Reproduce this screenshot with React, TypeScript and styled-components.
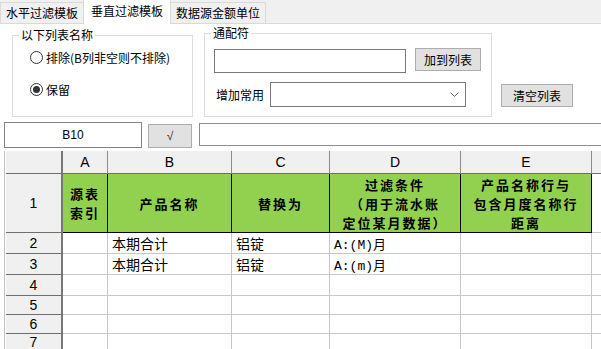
import React from "react";
import styled, { createGlobalStyle } from "styled-components";

const GlobalStyle = createGlobalStyle`
  html, body {
    margin: 0;
    padding: 0;
    background: #ffffff;
  }
  body {
    width: 601px;
    height: 349px;
    overflow: hidden;
    font-family: "Noto Sans CJK SC", "Microsoft YaHei", sans-serif;
    font-size: 12px;
    color: #000;
  }
`;

const TabStrip = styled.div`
  display: flex;
  align-items: flex-end;
  height: 24px;
  box-sizing: border-box;
  background: #f0f0f0;
  border-bottom: 1px solid #d9d9d9;
`;

const Tab = styled.div<{ $active?: boolean }>`
  box-sizing: border-box;
  height: ${(p) => (p.$active ? "25px" : "21px")};
  margin-bottom: ${(p) => (p.$active ? "-1px" : "0")};
  padding: 0 ${(p) => (p.$active ? "7px" : "5px")};
  line-height: ${(p) => (p.$active ? "22px" : "19px")};
  background: ${(p) => (p.$active ? "#ffffff" : "#f0f0f0")};
  border: 1px solid #d9d9d9;
  border-bottom: none;
  margin-left: ${(p) => (p.$active ? "-1px" : "0")};
  margin-right: ${(p) => (p.$active ? "-1px" : "0")};
  position: relative;
  z-index: ${(p) => (p.$active ? 1 : 0)};
  white-space: nowrap;
`;

const Panel = styled.div`
  display: flex;
  align-items: flex-start;
  height: 94px;
  box-sizing: border-box;
  padding-left: 12px;
`;

const Group = styled.fieldset<{ $w: number; $h: number; $top: number; $left?: number }>`
  box-sizing: border-box;
  margin: ${(p) => p.$top}px 0 0 ${(p) => p.$left ?? 0}px;
  padding: 0;
  min-width: 0;
  width: ${(p) => p.$w}px;
  height: ${(p) => p.$h}px;
  border: 1px solid #dcdcdc;
`;

const GroupTitle = styled.legend`
  margin-left: 6px;
  padding: 0 2px;
  font-size: 12px;
  line-height: 16px;
`;

const RadioList = styled.div`
  display: flex;
  flex-direction: column;
  gap: 12px;
  padding: 4px 0 0 17px;
`;

const RadioRow = styled.label`
  display: flex;
  align-items: center;
  height: 20px;
  gap: 3px;
`;

const RadioMark = styled.span<{ $checked?: boolean }>`
  display: flex;
  align-items: center;
  justify-content: center;
  flex: none;
  width: 13px;
  height: 13px;
  box-sizing: border-box;
  border: 1px solid #333;
  border-radius: 50%;
  background: #fff;
  &::after {
    content: "";
    width: 7px;
    height: 7px;
    border-radius: 50%;
    background: ${(p) => (p.$checked ? "#333" : "transparent")};
  }
`;

const WildRows = styled.div`
  display: flex;
  flex-direction: column;
  gap: 9px;
  padding: 7px 0 0 9px;
`;

const Row = styled.div`
  display: flex;
  align-items: flex-start;
`;

const TextBox = styled.div<{ $w: number }>`
  box-sizing: border-box;
  width: ${(p) => p.$w}px;
  height: 24px;
  margin-top: 1px;
  border: 1px solid #7a7a7a;
  background: #fff;
`;

const Button = styled.div<{ $w: number }>`
  box-sizing: border-box;
  width: ${(p) => p.$w}px;
  height: 23px;
  border: 1px solid #adadad;
  background: #e1e1e1;
  display: flex;
  align-items: center;
  justify-content: center;
  white-space: nowrap;
`;

const AddButton = styled(Button)`
  margin-left: 9px;
`;

const ClearButton = styled(Button)`
  margin: 60px 0 0 9px;
`;

const FieldLabel = styled.span`
  width: 48px;
  margin: 0 6px 0 2px;
  line-height: 25px;
  white-space: nowrap;
`;

const Combo = styled.div`
  box-sizing: border-box;
  width: 196px;
  height: 25px;
  border: 1px solid #7a7a7a;
  background: #fff;
  display: flex;
  align-items: center;
  justify-content: flex-end;
  padding-right: 6px;
`;

const Toolbar = styled.div`
  display: flex;
  align-items: flex-start;
  margin-top: 4px;
  height: 26px;
`;

const NameBox = styled.div`
  box-sizing: border-box;
  width: 138px;
  height: 26px;
  margin-left: 4px;
  border: 1px solid #828282;
  display: flex;
  align-items: center;
  justify-content: center;
  font-family: "Liberation Sans", Arial, sans-serif;
  font-size: 12px;
`;

const CheckButton = styled(Button)`
  height: 24px;
  margin: 2px 0 0 6px;
  font-family: "Liberation Sans", Arial, sans-serif;
  font-size: 12px;
  color: #333;
`;

const FormulaBox = styled.div`
  box-sizing: border-box;
  flex: 1;
  height: 23px;
  margin: 1px 0 0 7px;
  border: 1px solid #8c8c8c;
  border-right: none;
`;

const Sheet = styled.div`
  display: grid;
  grid-template-columns: 57px 45px 124px 98px 131px 131px 1fr;
  grid-template-rows: 23px 59px 21px 21px 21px 19px 19px 1fr;
  height: 198px;
  margin: 3px 0 0 4px;
  padding-left: 1px;
  border-left: 1px solid #c4c4c4;
  box-sizing: border-box;
`;

const HeadCell = styled.div<{ $row?: boolean; $last?: boolean }>`
  box-sizing: border-box;
  background: #f0f0f0;
  border-right: ${(p) => (p.$last ? "none" : p.$row ? "2px solid #787878" : "1px solid #8a8a8a")};
  border-bottom: 1px solid #6e6e6e;
  display: flex;
  align-items: center;
  justify-content: center;
  font-family: "Liberation Sans", Arial, sans-serif;
  font-size: 14px;
  color: #000;
`;

const TitleCell = styled.div`
  box-sizing: border-box;
  background: #92d050;
  border-right: 1px solid #000;
  border-bottom: 1px solid #000;
  display: flex;
  flex-direction: column;
  align-items: center;
  justify-content: center;
  text-align: center;
  font-weight: 700;
  font-size: 13px;
  letter-spacing: 2px;
`;

const TitleLine = styled.span`
  display: block;
  line-height: 19px;
  white-space: nowrap;
`;

const Cell = styled.div<{ $mono?: boolean; $last?: boolean }>`
  box-sizing: border-box;
  background: #fff;
  border-right: ${(p) => (p.$last ? "none" : "1px solid #c8c8c8")};
  border-bottom: 1px solid #c8c8c8;
  padding-left: 4px;
  display: flex;
  align-items: center;
  white-space: nowrap;
  font-size: ${(p) => (p.$mono ? "13px" : "14px")};
  font-family: ${(p) =>
    p.$mono
      ? '"Liberation Mono", "Noto Sans CJK SC", monospace'
      : '"Noto Sans CJK SC", sans-serif'};
`;

const columns = ["A", "B", "C", "D", "E"];

const titles: string[][] = [
  ["源表", "索引"],
  ["产品名称"],
  ["替换为"],
  ["过滤条件", "（用于流水账", "定位某月数据）"],
  ["产品名称行与", "包含月度名称行", "距离"],
];

const rows: { n: number; cells: string[] }[] = [
  { n: 2, cells: ["", "本期合计", "铝锭", "A:(M)月", ""] },
  { n: 3, cells: ["", "本期合计", "铝锭", "A:(m)月", ""] },
  { n: 4, cells: ["", "", "", "", ""] },
  { n: 5, cells: ["", "", "", "", ""] },
  { n: 6, cells: ["", "", "", "", ""] },
  { n: 7, cells: ["", "", "", "", ""] },
];

const Chevron = () => (
  <svg width="9" height="5" viewBox="0 0 9 5">
    <polyline points="0.5,0.5 4.5,4.5 8.5,0.5" fill="none" stroke="#606060" strokeWidth="1" />
  </svg>
);

const App = () => {
  return (
    <>
      <GlobalStyle />
      <TabStrip>
        <Tab>水平过滤模板</Tab>
        <Tab $active>垂直过滤模板</Tab>
        <Tab>数据源金额单位</Tab>
      </TabStrip>

      <Panel>
        <Group $w={181} $h={90} $top={3}>
          <GroupTitle>以下列表名称</GroupTitle>
          <RadioList>
            <RadioRow>
              <RadioMark />
              <span>排除(B列非空则不排除)</span>
            </RadioRow>
            <RadioRow>
              <RadioMark $checked />
              <span>保留</span>
            </RadioRow>
          </RadioList>
        </Group>

        <Group $w={288} $h={92} $top={1} $left={11}>
          <GroupTitle>通配符</GroupTitle>
          <WildRows>
            <Row>
              <TextBox $w={192} />
              <AddButton $w={66}>加到列表</AddButton>
            </Row>
            <Row>
              <FieldLabel>增加常用</FieldLabel>
              <Combo>
                <Chevron />
              </Combo>
            </Row>
          </WildRows>
        </Group>

        <ClearButton $w={72}>清空列表</ClearButton>
      </Panel>

      <Toolbar>
        <NameBox>B10</NameBox>
        <CheckButton $w={44}>√</CheckButton>
        <FormulaBox />
      </Toolbar>

      <Sheet>
        <HeadCell $row />
        {columns.map((c) => (
          <HeadCell key={c}>{c}</HeadCell>
        ))}
        <HeadCell $last />

        <HeadCell $row>1</HeadCell>
        {titles.map((lines, i) => (
          <TitleCell key={i}>
            {lines.map((l) => (
              <TitleLine key={l}>{l}</TitleLine>
            ))}
          </TitleCell>
        ))}
        <Cell $last />

        {rows.map((r) => (
          <React.Fragment key={r.n}>
            <HeadCell $row>{r.n}</HeadCell>
            {r.cells.map((v, i) => (
              <Cell key={i} $mono={i === 3}>
                {v}
              </Cell>
            ))}
            <Cell $last />
          </React.Fragment>
        ))}
      </Sheet>
    </>
  );
};

export default App;
